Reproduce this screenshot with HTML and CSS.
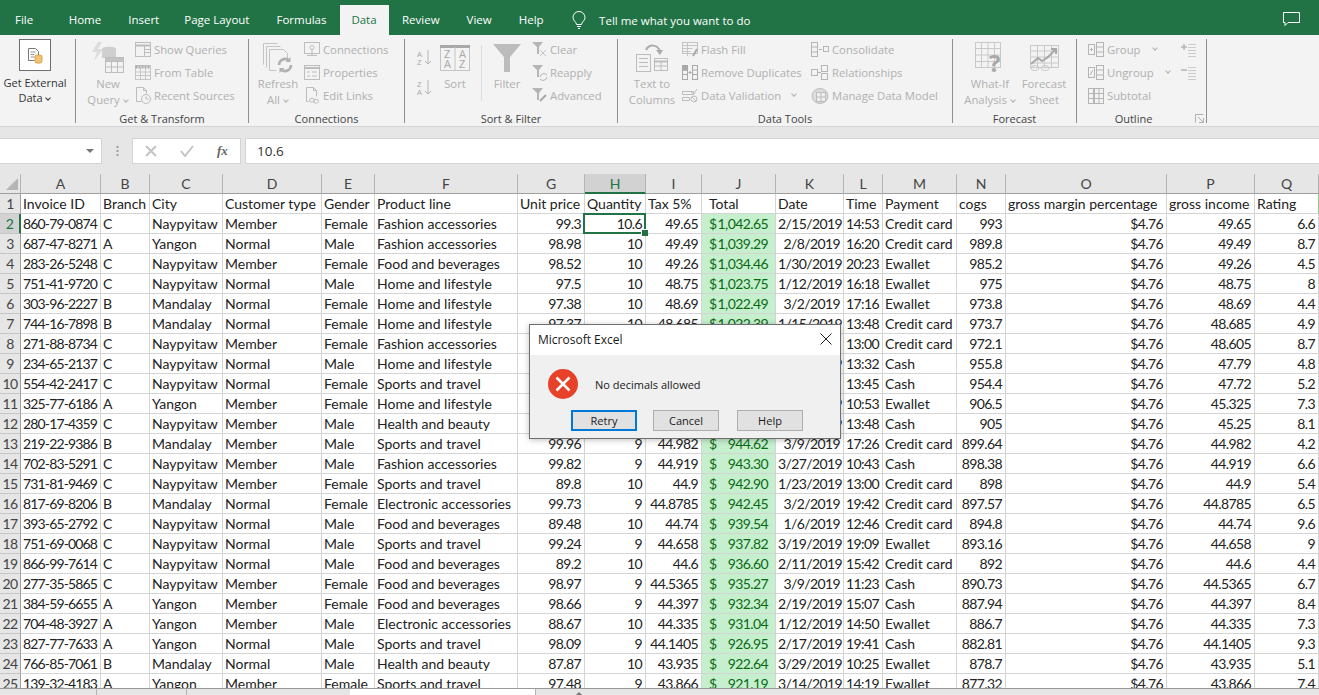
FILE: index.html
```html
<!DOCTYPE html>
<html lang="en">
<head>
    <meta charset="UTF-8">
    <meta name="viewport" content="width=device-width, initial-scale=1.0">
    <title>Microsoft Excel</title>
    <link rel="stylesheet" href="styles.css">
</head>
<body>
    <!-- Tabs -->
    <div class="tabbar">
        <span class="tab tab-file">File</span>
        <span class="tab">Home</span>
        <span class="tab">Insert</span>
        <span class="tab tab-layout">Page Layout</span>
        <span class="tab">Formulas</span>
        <span class="tab tab-active">Data</span>
        <span class="tab">Review</span>
        <span class="tab">View</span>
        <span class="tab">Help</span>
        <svg class="bulb" width="14" height="18" viewBox="0 0 14 18" fill="none" stroke="#fff"><path d="M4.5 13.5c0-2.500-3.500-3.500-3.500-7a6 6 0 0 1 12 0c0 3.500-3.500 4.500-3.500 7z"/><path d="M5 15.500h4M6 17.500h2"/></svg>
        <span class="tell">Tell me what you want to do</span>
        <svg class="comment" width="17" height="15" viewBox="0 0 17 15" fill="none" stroke="#fff"><path d="M.5.500h16v10H5l-3 3v-3H.5z"/></svg>
    </div>

    <!-- Ribbon -->
    <div class="ribbon">
        <div class="group g-ext">
            <div class="group-body">
                <div class="big big-ext">
                    <div class="ext-box">
                        <svg width="16" height="17" viewBox="0 0 16 17" fill="none" stroke="#777"><path d="M1.500 1.500h7l3 3v4M1.500 1.500v12h6"/><path d="M3.500 5h5M3.500 7.500h4M3.500 10h4" stroke="#999"/><rect x="8" y="8" width="7" height="8" rx="2" fill="#f2c375" stroke="#d9a24a"/></svg>
                    </div>
                    <span class="dark ext-text">Get External</span>
                    <span class="dark">Data <i class="chev dark-chev"></i></span>
                </div>
            </div>
            <div class="group-label">&nbsp;</div>
        </div>

        <div class="group g-trans">
            <div class="group-body">
                <div class="big big-query">
                    <div class="big-icon">
                        <svg width="34" height="33" viewBox="0 0 34 33" fill="none" stroke="#bdbdbd"><path d="M7 1 1 11h5l-3 9 9-12H7l4-7z" fill="#dcdcdc" stroke="none"/><path d="M11 8c0-3 14-3 14 0v9H11z" fill="#cfcfcf" stroke="none"/><rect x="14.500" y="16.500" width="18" height="15" fill="#f3f3f3"/><path d="M14.500 20.500h18v-4h-18z" fill="#c4c4c4"/><path d="M14.500 26h18M20.500 20v11M26.500 20v11"/></svg>
                    </div>
                    <span>New</span>
                    <span>Query <i class="chev"></i></span>
                </div>
                <div class="smalls smalls-query">
                    <div class="small"><svg width="16" height="15" viewBox="0 0 16 15" fill="none" stroke="#bdbdbd"><rect x=".5" y=".5" width="15" height="14"/><path d="M.5 3.500h15" stroke-width="2"/><path d="M9.500 4v10M9.500 7.500h6M9.500 10.500h6"/></svg>Show Queries</div>
                    <div class="small"><svg width="16" height="15" viewBox="0 0 16 15" fill="none" stroke="#c6c6c6"><rect x=".5" y=".5" width="15" height="14"/><path d="M.5 2h15" stroke="#a8a8a8" stroke-width="3" stroke-dasharray="2 1"/><path d="M.5 7h15M.5 10.500h15M5.500 3v11M10.500 3v11"/></svg>From Table</div>
                    <div class="small"><svg width="16" height="17" viewBox="0 0 16 17" fill="none" stroke="#bdbdbd"><path d="M6.500 14.500h-5v-14h7l3 3v3M8.500 .5v3h3"/><circle cx="11" cy="12" r="4.500"/><path d="M11 9.500V12h2.500"/></svg>Recent Sources</div>
                </div>
            </div>
            <div class="group-label">Get &amp; Transform</div>
        </div>

        <div class="group g-conn">
            <div class="group-body">
                <div class="big big-refresh">
                    <div class="big-icon">
                        <svg width="32" height="32" viewBox="0 0 32 32" fill="none" stroke="#c4c4c4"><path d="M1.500 22.500v-21h14M4.500 25.500v-21h14"/><path d="M7.500 28.500v-21h14l4 4v7M7.500 28.500h7" /><path d="M17 23a6 6 0 0 1 10-4.500M29 23a6 6 0 0 1-10 4.500" stroke="#b0b0b0" stroke-width="2.500"/><path d="M28.500 15v5h-5M17.500 31v-5h5" fill="#b0b0b0" stroke="none"/></svg>
                    </div>
                    <span>Refresh</span>
                    <span>All <i class="chev"></i></span>
                </div>
                <div class="smalls">
                    <div class="small"><svg width="16" height="15" viewBox="0 0 16 15" fill="none" stroke="#bdbdbd"><rect x=".5" y=".5" width="15" height="11"/><circle cx="8" cy="5.500" r="2"/><path d="M3 13.500h10M8 8v5"/></svg>Connections</div>
                    <div class="small"><svg width="16" height="15" viewBox="0 0 16 15" fill="none" stroke="#bdbdbd"><rect x=".5" y=".5" width="15" height="14"/><path d="M.5 3h15" stroke-width="2"/><path d="M3 7h3M3 11h3M8 7h5M8 11h5"/></svg>Properties</div>
                    <div class="small"><svg width="16" height="17" viewBox="0 0 16 17" fill="none" stroke="#bdbdbd"><path d="M4.500 14.500h-2v-14h7l3 3v6M9.500 .5v3h3"/><rect x="5.500" y="11.500" width="5" height="3.500" rx="1.700"/><rect x="9.500" y="12.500" width="5" height="3.500" rx="1.700"/></svg>Edit Links</div>
                </div>
            </div>
            <div class="group-label">Connections</div>
        </div>

        <div class="group g-sort">
            <div class="group-body">
                <div class="sort-arrows">
                    <svg width="15" height="17" viewBox="0 0 15 17" fill="none" stroke="#b5b5b5"><text x="0" y="7.500" class="icon-letter">A</text><text x="0" y="15.500" class="icon-letter">Z</text><path d="M11 1v14M8 12l3 3 3-3"/></svg>
                    <svg width="15" height="17" viewBox="0 0 15 17" fill="none" stroke="#b5b5b5"><text x="0" y="7.500" class="icon-letter">Z</text><text x="0" y="15.500" class="icon-letter">A</text><path d="M11 1v14M8 12l3 3 3-3"/></svg>
                </div>
                <div class="big big-sort">
                    <div class="big-icon">
                        <svg width="30" height="26" viewBox="0 0 30 26" fill="none" stroke="#c4c4c4"><rect x=".5" y=".5" width="29" height="25"/><path d="M0 1.500h30" stroke="#a8a8a8" stroke-width="3"/><path d="M15 2v23"/><text x="4" y="13" class="icon-letter big-letter">Z</text><text x="19" y="13" class="icon-letter big-letter">A</text><text x="4" y="23" class="icon-letter big-letter">A</text><text x="19" y="23" class="icon-letter big-letter">Z</text></svg>
                    </div>
                    <span>Sort</span>
                </div>
                <div class="vsep"></div>
                <div class="big big-filter">
                    <div class="big-icon">
                        <svg width="28" height="28" viewBox="0 0 28 28"><path d="M0 0h28L17 13v15h-6V13z" fill="#bcbcbc"/></svg>
                    </div>
                    <span>Filter</span>
                </div>
                <div class="smalls smalls-filter">
                    <div class="small"><svg width="16" height="16" viewBox="0 0 16 16"><path d="M0 0h11L7 5v7H5V5z" fill="#b5b5b5"/><path d="M8 8l6 6M14 8l-6 6" stroke="#c4c4c4" fill="none"/></svg>Clear</div>
                    <div class="small"><svg width="16" height="16" viewBox="0 0 16 16"><path d="M0 0h11L7 5v7H5V5z" fill="#b5b5b5"/><path d="M8 12a4 4 0 0 1 7-2M15 12a4 4 0 0 1-7 2" stroke="#b5b5b5" fill="none"/></svg>Reapply</div>
                    <div class="small"><svg width="16" height="16" viewBox="0 0 16 16"><path d="M0 0h11L7 5v7H5V5z" fill="#b5b5b5"/><path d="M8 13l6-6" stroke="#a8a8a8" stroke-width="2"/></svg>Advanced</div>
                </div>
            </div>
            <div class="group-label">Sort &amp; Filter</div>
        </div>

        <div class="group g-tools">
            <div class="group-body">
                <div class="big big-text">
                    <div class="big-icon">
                        <svg width="32" height="28" viewBox="0 0 32 28" fill="none" stroke="#bdbdbd"><rect x=".5" y="10.500" width="14" height="17"/><path d="M3 14.500h9M3 18.500h9M3 22.500h9"/><rect x="18.500" y="14.500" width="13" height="12"/><path d="M18.500 17.500h13" stroke-width="2"/><path d="M18.500 22h13M25 18v8"/><path d="M10 6c3-6 11-6 14 1" stroke="#aaa" stroke-width="2"/><path d="M20 6h7l-3 5z" fill="#aaa" stroke="none"/></svg>
                    </div>
                    <span>Text to</span>
                    <span>Columns</span>
                </div>
                <div class="smalls smalls-tools">
                    <div class="small"><svg width="16" height="15" viewBox="0 0 16 15" fill="none" stroke="#c4c4c4"><rect x=".5" y=".5" width="15" height="11"/><path d="M.5 3.500h15M.5 6.500h10M.5 9.500h8M5.500 1v13"/><path d="M11 14l4-7" stroke="#aaa" stroke-width="2"/></svg>Flash Fill</div>
                    <div class="small"><svg width="16" height="15" viewBox="0 0 16 15" fill="none" stroke="#a8a8a8"><rect x=".5" y=".5" width="5" height="14"/><rect x="10.500" y=".5" width="5" height="14"/><path d="M.5 5h5M.5 9.500h5M10.500 5h5M10.500 9.500h5"/><rect x="1" y="1" width="4" height="4" fill="#a8a8a8"/><path d="M6.500 7.500h3M8 6v3"/></svg>Remove Duplicates</div>
                    <div class="small"><svg width="16" height="15" viewBox="0 0 16 15" fill="none" stroke="#bdbdbd"><path d="M.5 3.500h11v3H.5zM.5 9.500h7v3H.5z"/><path d="M9 4l3 2 3-5"/><circle cx="12" cy="11" r="3"/><path d="M10 9l4 4"/></svg>Data Validation <i class="chev chev-dv"></i></div>
                </div>
                <div class="smalls smalls-model">
                    <div class="small"><svg width="18" height="15" viewBox="0 0 18 15" fill="none" stroke="#b5b5b5"><rect x=".5" y=".5" width="6" height="14"/><path d="M.5 5h6M.5 10h6M8 7.500h3"/><rect x="12.500" y="4.500" width="5" height="5"/></svg>Consolidate</div>
                    <div class="small"><svg width="18" height="15" viewBox="0 0 18 15" fill="none" stroke="#b5b5b5"><rect x=".5" y="4.500" width="6" height="6"/><rect x="10.500" y=".5" width="6" height="6"/><rect x="10.500" y="8.500" width="6" height="6"/><path d="M7 7.500h3"/></svg>Relationships</div>
                    <div class="small"><svg width="18" height="16" viewBox="0 0 18 16" fill="none" stroke="#bdbdbd"><ellipse cx="9" cy="8" rx="8" ry="7.500" fill="#dcdcdc"/><rect x="5.500" y="4.500" width="9" height="9" fill="#eee"/><path d="M5.500 9h9M10 4.500v9"/></svg>Manage Data Model</div>
                </div>
            </div>
            <div class="group-label">Data Tools</div>
        </div>

        <div class="group g-fcast">
            <div class="group-body">
                <div class="big big-whatif">
                    <div class="big-icon">
                        <svg width="30" height="32" viewBox="0 0 30 32" fill="none" stroke="#c9c9c9"><rect x=".5" y=".5" width="25" height="25"/><path d="M.5 6.500h25M.5 13h25M.5 19.500h25M6.500 1v25M13 1v25M19.500 1v25"/><text x="14" y="30" class="icon-q">?</text></svg>
                    </div>
                    <span>What-If</span>
                    <span>Analysis <i class="chev"></i></span>
                </div>
                <div class="big big-sheet">
                    <div class="big-icon">
                        <svg width="29" height="26" viewBox="0 0 29 26" fill="none" stroke="#c9c9c9"><rect x=".5" y=".5" width="28" height="22"/><path d="M.5 6h28M.5 12h28M.5 18h28M7.500 1v21M14.500 1v21M21.500 1v21"/><path d="M1 19l7-6 4 3 6-4" stroke="#a8a8a8" stroke-width="2"/><path d="M17 13l8-8M21 4h5v5" stroke="#a8a8a8" stroke-width="2"/><ellipse cx="5" cy="23" rx="4" ry="2.500"/><ellipse cx="15" cy="23" rx="4" ry="2.500"/></svg>
                    </div>
                    <span>Forecast</span>
                    <span>Sheet</span>
                </div>
            </div>
            <div class="group-label">Forecast</div>
        </div>

        <div class="group g-outline">
            <div class="group-body">
                <div class="smalls smalls-outline">
                    <div class="small"><svg width="16" height="15" viewBox="0 0 16 15" fill="none" stroke="#b5b5b5"><rect x=".5" y="2.500" width="6" height="10"/><path d="M2 7.500h3M3.500 6v3"/><rect x="8.500" y=".5" width="7" height="14"/><path d="M8.500 5h7M8.500 10h7"/></svg>Group <i class="chev chev-group"></i></div>
                    <div class="small"><svg width="16" height="15" viewBox="0 0 16 15" fill="none" stroke="#b5b5b5"><rect x=".5" y="2.500" width="6" height="10"/><path d="M2 10l3-5"/><rect x="8.500" y=".5" width="7" height="14"/><path d="M8.500 5h7M8.500 10h7"/></svg>Ungroup <i class="chev chev-ungroup"></i></div>
                    <div class="small"><svg width="16" height="16" viewBox="0 0 16 16" fill="none" stroke="#b5b5b5"><rect x=".5" y=".5" width="5" height="15"/><rect x="6.500" y=".5" width="9" height="15"/><path d="M.5 5.500h15M.5 10.500h15M11 1v14"/></svg>Subtotal</div>
                </div>
                <div class="smalls smalls-rows">
                    <div class="small"><svg width="15" height="14" viewBox="0 0 15 14" fill="none" stroke="#b5b5b5"><path d="M0 4h6M3 1v6" stroke-width="1.500"/><path d="M7 1.500h8M7 4.500h8M7 7.500h8M7 10.500h8M7 13.500h8" stroke="#ccc"/></svg></div>
                    <div class="small"><svg width="15" height="14" viewBox="0 0 15 14" fill="none" stroke="#b5b5b5"><path d="M0 4h6" stroke-width="1.500"/><path d="M7 1.500h8M7 4.500h8M7 7.500h8M7 10.500h8M7 13.500h8" stroke="#ccc"/></svg></div>
                </div>
            </div>
            <div class="group-label label-outline">Outline</div>
            <svg class="launcher" width="9" height="9" viewBox="0 0 9 9" fill="none" stroke="#b0b0b0"><path d="M.5 8.500v-8h8M8.500 4v4.500H4M3 3l5 5"/></svg>
        </div>
    </div>

    <!-- Formula bar -->
    <div class="formula">
        <div class="namebox"><i class="name-arrow"></i></div>
        <div class="fdots"></div>
        <div class="fbuttons">
            <svg width="12" height="12" viewBox="0 0 12 12" stroke="#c4c4c4" stroke-width="2"><path d="M1 1l10 10M11 1 1 11"/></svg>
            <svg width="14" height="12" viewBox="0 0 14 12" stroke="#c4c4c4" stroke-width="2" fill="none"><path d="M1 6l4 5 8-10"/></svg>
            <span class="fx">fx</span>
        </div>
        <div class="finput">10.6</div>
    </div>

    <!-- Grid -->
    <div class="grid">
        <table class="sheet">
            <colgroup>
                <col class="c-rh"><col class="c-a"><col class="c-b"><col class="c-c"><col class="c-d"><col class="c-e"><col class="c-f"><col class="c-g"><col class="c-h"><col class="c-i"><col class="c-j"><col class="c-k"><col class="c-l"><col class="c-m"><col class="c-n"><col class="c-o"><col class="c-p"><col class="c-q">
            </colgroup>
            <thead>
                <tr>
                    <th class="corner"><svg width="12" height="12" viewBox="0 0 12 12"><path d="M12 0v12H0z" fill="#b5b5b5"/></svg></th>
                    <th>A</th><th>B</th><th>C</th><th>D</th><th>E</th><th>F</th><th>G</th><th class="col-on">H</th><th>I</th><th>J</th><th>K</th><th>L</th><th>M</th><th>N</th><th>O</th><th>P</th><th>Q</th>
                </tr>
            </thead>
            <tbody>
                <tr class="titles"><th>1</th><td>Invoice ID</td><td>Branch</td><td>City</td><td>Customer type</td><td>Gender</td><td>Product line</td><td>Unit price</td><td>Quantity</td><td>Tax 5%</td><td class="title-total">Total</td><td>Date</td><td>Time</td><td>Payment</td><td>cogs</td><td>gross margin percentage</td><td>gross income</td><td class="title-edge">Rating</td></tr>
                <tr><th class="row-on">2</th><td>860-79-0874</td><td>C</td><td>Naypyitaw</td><td>Member</td><td>Female</td><td>Fashion accessories</td><td>99.3</td><td class="sel">10.6</td><td>49.65</td><td><span>$</span>1,042.65</td><td>2/15/2019</td><td>14:53</td><td>Credit card</td><td>993</td><td>$4.76</td><td>49.65</td><td>6.6</td></tr>
                <tr><th>3</th><td>687-47-8271</td><td>A</td><td>Yangon</td><td>Normal</td><td>Male</td><td>Fashion accessories</td><td>98.98</td><td>10</td><td>49.49</td><td><span>$</span>1,039.29</td><td>2/8/2019</td><td>16:20</td><td>Credit card</td><td>989.8</td><td>$4.76</td><td>49.49</td><td>8.7</td></tr>
                <tr><th>4</th><td>283-26-5248</td><td>C</td><td>Naypyitaw</td><td>Member</td><td>Female</td><td>Food and beverages</td><td>98.52</td><td>10</td><td>49.26</td><td><span>$</span>1,034.46</td><td>1/30/2019</td><td>20:23</td><td>Ewallet</td><td>985.2</td><td>$4.76</td><td>49.26</td><td>4.5</td></tr>
                <tr><th>5</th><td>751-41-9720</td><td>C</td><td>Naypyitaw</td><td>Normal</td><td>Male</td><td>Home and lifestyle</td><td>97.5</td><td>10</td><td>48.75</td><td><span>$</span>1,023.75</td><td>1/12/2019</td><td>16:18</td><td>Ewallet</td><td>975</td><td>$4.76</td><td>48.75</td><td>8</td></tr>
                <tr><th>6</th><td>303-96-2227</td><td>B</td><td>Mandalay</td><td>Normal</td><td>Female</td><td>Home and lifestyle</td><td>97.38</td><td>10</td><td>48.69</td><td><span>$</span>1,022.49</td><td>3/2/2019</td><td>17:16</td><td>Ewallet</td><td>973.8</td><td>$4.76</td><td>48.69</td><td>4.4</td></tr>
                <tr><th>7</th><td>744-16-7898</td><td>B</td><td>Mandalay</td><td>Normal</td><td>Female</td><td>Home and lifestyle</td><td>97.37</td><td>10</td><td>48.685</td><td><span>$</span>1,022.39</td><td>1/15/2019</td><td>13:48</td><td>Credit card</td><td>973.7</td><td>$4.76</td><td>48.685</td><td>4.9</td></tr>
                <tr><th>8</th><td>271-88-8734</td><td>C</td><td>Naypyitaw</td><td>Member</td><td>Female</td><td>Fashion accessories</td><td>97.21</td><td>10</td><td>48.605</td><td><span>$</span>1,020.71</td><td>2/8/2019</td><td>13:00</td><td>Credit card</td><td>972.1</td><td>$4.76</td><td>48.605</td><td>8.7</td></tr>
                <tr><th>9</th><td>234-65-2137</td><td>C</td><td>Naypyitaw</td><td>Normal</td><td>Male</td><td>Home and lifestyle</td><td>95.58</td><td>10</td><td>47.79</td><td><span>$</span>1,003.59</td><td>1/16/2019</td><td>13:32</td><td>Cash</td><td>955.8</td><td>$4.76</td><td>47.79</td><td>4.8</td></tr>
                <tr><th>10</th><td>554-42-2417</td><td>C</td><td>Naypyitaw</td><td>Normal</td><td>Female</td><td>Sports and travel</td><td>95.44</td><td>10</td><td>47.72</td><td><span>$</span>1,002.12</td><td>1/9/2019</td><td>13:45</td><td>Cash</td><td>954.4</td><td>$4.76</td><td>47.72</td><td>5.2</td></tr>
                <tr><th>11</th><td>325-77-6186</td><td>A</td><td>Yangon</td><td>Member</td><td>Female</td><td>Home and lifestyle</td><td>90.65</td><td>10</td><td>45.325</td><td><span>$</span>951.83</td><td>3/10/2019</td><td>10:53</td><td>Ewallet</td><td>906.5</td><td>$4.76</td><td>45.325</td><td>7.3</td></tr>
                <tr><th>12</th><td>280-17-4359</td><td>C</td><td>Naypyitaw</td><td>Member</td><td>Male</td><td>Health and beauty</td><td>90.5</td><td>10</td><td>45.25</td><td><span>$</span>950.25</td><td>1/25/2019</td><td>13:48</td><td>Cash</td><td>905</td><td>$4.76</td><td>45.25</td><td>8.1</td></tr>
                <tr><th>13</th><td>219-22-9386</td><td>B</td><td>Mandalay</td><td>Member</td><td>Male</td><td>Sports and travel</td><td>99.96</td><td>9</td><td>44.982</td><td><span>$</span>944.62</td><td>3/9/2019</td><td>17:26</td><td>Credit card</td><td>899.64</td><td>$4.76</td><td>44.982</td><td>4.2</td></tr>
                <tr><th>14</th><td>702-83-5291</td><td>C</td><td>Naypyitaw</td><td>Member</td><td>Male</td><td>Fashion accessories</td><td>99.82</td><td>9</td><td>44.919</td><td><span>$</span>943.30</td><td>3/27/2019</td><td>10:43</td><td>Cash</td><td>898.38</td><td>$4.76</td><td>44.919</td><td>6.6</td></tr>
                <tr><th>15</th><td>731-81-9469</td><td>C</td><td>Naypyitaw</td><td>Member</td><td>Female</td><td>Sports and travel</td><td>89.8</td><td>10</td><td>44.9</td><td><span>$</span>942.90</td><td>1/23/2019</td><td>13:00</td><td>Credit card</td><td>898</td><td>$4.76</td><td>44.9</td><td>5.4</td></tr>
                <tr><th>16</th><td>817-69-8206</td><td>B</td><td>Mandalay</td><td>Normal</td><td>Female</td><td>Electronic accessories</td><td>99.73</td><td>9</td><td>44.8785</td><td><span>$</span>942.45</td><td>3/2/2019</td><td>19:42</td><td>Credit card</td><td>897.57</td><td>$4.76</td><td>44.8785</td><td>6.5</td></tr>
                <tr><th>17</th><td>393-65-2792</td><td>C</td><td>Naypyitaw</td><td>Normal</td><td>Male</td><td>Food and beverages</td><td>89.48</td><td>10</td><td>44.74</td><td><span>$</span>939.54</td><td>1/6/2019</td><td>12:46</td><td>Credit card</td><td>894.8</td><td>$4.76</td><td>44.74</td><td>9.6</td></tr>
                <tr><th>18</th><td>751-69-0068</td><td>C</td><td>Naypyitaw</td><td>Normal</td><td>Male</td><td>Sports and travel</td><td>99.24</td><td>9</td><td>44.658</td><td><span>$</span>937.82</td><td>3/19/2019</td><td>19:09</td><td>Ewallet</td><td>893.16</td><td>$4.76</td><td>44.658</td><td>9</td></tr>
                <tr><th>19</th><td>866-99-7614</td><td>C</td><td>Naypyitaw</td><td>Normal</td><td>Male</td><td>Food and beverages</td><td>89.2</td><td>10</td><td>44.6</td><td><span>$</span>936.60</td><td>2/11/2019</td><td>15:42</td><td>Credit card</td><td>892</td><td>$4.76</td><td>44.6</td><td>4.4</td></tr>
                <tr><th>20</th><td>277-35-5865</td><td>C</td><td>Naypyitaw</td><td>Member</td><td>Female</td><td>Food and beverages</td><td>98.97</td><td>9</td><td>44.5365</td><td><span>$</span>935.27</td><td>3/9/2019</td><td>11:23</td><td>Cash</td><td>890.73</td><td>$4.76</td><td>44.5365</td><td>6.7</td></tr>
                <tr><th>21</th><td>384-59-6655</td><td>A</td><td>Yangon</td><td>Member</td><td>Female</td><td>Food and beverages</td><td>98.66</td><td>9</td><td>44.397</td><td><span>$</span>932.34</td><td>2/19/2019</td><td>15:07</td><td>Cash</td><td>887.94</td><td>$4.76</td><td>44.397</td><td>8.4</td></tr>
                <tr><th>22</th><td>704-48-3927</td><td>A</td><td>Yangon</td><td>Member</td><td>Male</td><td>Electronic accessories</td><td>88.67</td><td>10</td><td>44.335</td><td><span>$</span>931.04</td><td>1/12/2019</td><td>14:50</td><td>Ewallet</td><td>886.7</td><td>$4.76</td><td>44.335</td><td>7.3</td></tr>
                <tr><th>23</th><td>827-77-7633</td><td>A</td><td>Yangon</td><td>Normal</td><td>Male</td><td>Sports and travel</td><td>98.09</td><td>9</td><td>44.1405</td><td><span>$</span>926.95</td><td>2/17/2019</td><td>19:41</td><td>Cash</td><td>882.81</td><td>$4.76</td><td>44.1405</td><td>9.3</td></tr>
                <tr><th>24</th><td>766-85-7061</td><td>B</td><td>Mandalay</td><td>Normal</td><td>Male</td><td>Health and beauty</td><td>87.87</td><td>10</td><td>43.935</td><td><span>$</span>922.64</td><td>3/29/2019</td><td>10:25</td><td>Ewallet</td><td>878.7</td><td>$4.76</td><td>43.935</td><td>5.1</td></tr>
                <tr><th>25</th><td>139-32-4183</td><td>A</td><td>Yangon</td><td>Member</td><td>Female</td><td>Sports and travel</td><td>97.48</td><td>9</td><td>43.866</td><td><span>$</span>921.19</td><td>3/14/2019</td><td>14:19</td><td>Ewallet</td><td>877.32</td><td>$4.76</td><td>43.866</td><td>7.4</td></tr>
            </tbody>
        </table>
    </div>

    <!-- Sheet tabs strip, cut off by the window -->
    <div class="bottom">
        <div class="bottom-seg seg-1"></div>
        <div class="bottom-seg seg-2"></div>
        <div class="bottom-seg seg-3"></div>
        <div class="bottom-white"></div>
        <div class="bottom-rest"><i class="scroll-arrow"></i></div>
    </div>

    <!-- Validation message -->
    <div class="dialog">
        <div class="dialog-title">
            <span>Microsoft Excel</span>
            <svg width="12" height="12" viewBox="0 0 12 12" stroke="#222" fill="none"><path d="M.5.5l11 11M11.500.5l-11 11"/></svg>
        </div>
        <div class="dialog-body">
            <div class="dialog-msg">
                <svg width="30" height="30" viewBox="0 0 30 30"><circle cx="15" cy="15" r="15" fill="#e8412a"/><path d="M8.500 8.500l13 13M21.500 8.500l-13 13" stroke="#fff" stroke-width="2.500"/></svg>
                <span>No decimals allowed</span>
            </div>
            <div class="dialog-buttons">
                <button class="btn btn-default">Retry</button>
                <button class="btn btn-cancel">Cancel</button>
                <button class="btn btn-help">Help</button>
            </div>
        </div>
    </div>
</body>
</html>
```

FILE: styles.css
```css
* {
    box-sizing: border-box;
}

body {
    margin: 0;
    width: 1319px;
    height: 695px;
    overflow: hidden;
    display: flex;
    flex-direction: column;
    position: relative;
    font-family: "Open Sans", "Noto Sans", sans-serif;
    font-size: 11.3px;
    background-color: #e6e6e6;
}

/* tabs */
.tabbar {
    height: 35px;
    flex: none;
    display: flex;
    align-items: center;
    padding-top: 5px;
    background-color: #217346;
    color: #fff;
    font-size: 11.5px;
}

.tab {
    height: 30px;
    line-height: 30px;
    padding: 0 13.5px;
}

.tab-file {
    padding-left: 15px;
    padding-right: 22px;
}

.tab-layout {
    padding-left: 11.5px;
}

.tab-active {
    width: 49px;
    margin-left: -0.5px;
    padding: 0;
    text-align: center;
    background-color: #f3f3f3;
    color: #217346;
}

.bulb {
    margin-left: 15px;
    margin-right: 13px;
}

.comment {
    margin-left: auto;
    margin-right: 19px;
    margin-top: -2px;
}

/* ribbon */
.ribbon {
    height: 92px;
    flex: none;
    display: flex;
    padding-top: 4px;
    background-color: #f3f3f3;
    border-bottom: 1px solid #d5d5d5;
    color: #b0b0b0;
}

.group {
    height: 84px;
    flex: none;
    position: relative;
    border-right: 1px solid #8f8f8f;
}

.g-ext { width: 76px; }
.g-trans { width: 173px; }
.g-conn { width: 156px; }
.g-sort { width: 213px; }
.g-tools { width: 335px; }
.g-fcast { width: 124px; }
.g-outline { width: 130px; }

.group-body {
    height: 72px;
    display: flex;
}

.group-label {
    height: 16px;
    line-height: 16px;
    font-size: 11px;
    text-align: center;
    color: #444;
    white-space: nowrap;
}

.label-outline {
    padding-right: 16px;
}

.launcher {
    position: absolute;
    right: 2px;
    bottom: 0;
}

.big {
    flex: none;
    display: flex;
    flex-direction: column;
    align-items: center;
    line-height: 16px;
    white-space: nowrap;
}

.big-icon {
    height: 37px;
    display: flex;
    align-items: center;
}

.dark {
    color: #333;
    font-size: 11px;
    line-height: 15px;
}

.big-ext { width: 70px; }
.big-query { width: 50px; margin-left: 7px; }
.big-refresh { width: 46px; margin-left: 6px; }
.big-sort { width: 40px; margin-left: 3px; }
.big-filter { width: 40px; margin-left: 5px; }
.big-text { width: 56px; margin-left: 6px; }
.big-whatif { width: 62px; margin-left: 6px; }
.big-sheet { width: 46px; }

.ext-box {
    width: 32px;
    height: 32px;
    border: 1px solid #6e6e6e;
    background-color: #fff;
    display: flex;
    align-items: center;
    justify-content: center;
}

.ext-text {
    margin-top: 4px;
}

.chev {
    display: inline-block;
    width: 4px;
    height: 4px;
    margin: 0 1px 2px 1px;
    border-right: 1px solid #b0b0b0;
    border-bottom: 1px solid #b0b0b0;
    transform: rotate(45deg);
}

.dark-chev {
    border-color: #333;
}

.chev-dv { margin-left: 8px; }
.chev-group { margin-left: 10px; }
.chev-ungroup { margin-left: 9px; }

.smalls {
    flex: none;
    margin-left: 3px;
    margin-top: -1px;
}

.small {
    height: 23px;
    display: flex;
    align-items: center;
    gap: 3px;
    white-space: nowrap;
}

.small svg {
    flex: none;
}

.small .chev {
    margin-bottom: 3px;
}

.smalls-query { margin-left: 2px; }
.smalls-filter { margin-left: 5px; }
.smalls-filter .small { gap: 2px; }
.smalls-tools { width: 129px; margin-left: 2px; }
.smalls-model { margin-left: 0; }
.smalls-outline { width: 93px; margin-left: 11px; }
.smalls-rows { margin-left: 0; }

.sort-arrows {
    margin-left: 12px;
    padding-top: 10px;
    display: flex;
    flex-direction: column;
    gap: 13px;
}

.vsep {
    width: 1px;
    height: 56px;
    margin: 6px 0 0 6px;
    background-color: #dcdcdc;
}

.icon-letter {
    font-family: "Open Sans", sans-serif;
    font-size: 8px;
    fill: #a8a8a8;
    stroke: none;
}

.big-letter {
    font-size: 11px;
}

.icon-q {
    font-family: "Open Sans", sans-serif;
    font-size: 24px;
    font-weight: 700;
    fill: #a8a8a8;
    stroke: none;
}

/* formula bar */
.formula {
    height: 47px;
    flex: none;
    display: flex;
    padding: 11px 0 10px;
    background-color: #e6e6e6;
}

.namebox, .fbuttons, .finput {
    height: 26px;
    background-color: #fff;
    border: 1px solid #d4d4d4;
}

.namebox {
    width: 102px;
    border-left: 0;
    position: relative;
}

.name-arrow {
    position: absolute;
    right: 7px;
    top: 10px;
    border-left: 4px solid transparent;
    border-right: 4px solid transparent;
    border-top: 4px solid #777;
}

.fdots {
    width: 30px;
    background: radial-gradient(circle, #999 1px, transparent 1.2px) center 8px / 3px 4px repeat-y;
    margin: 6px 0 6px;
    height: 14px;
    background-position: center;
}

.fbuttons {
    width: 109px;
    display: flex;
    align-items: center;
    gap: 23px;
    padding-left: 12px;
}

.fx {
    font-family: "Liberation Serif", serif;
    font-style: italic;
    font-weight: 700;
    font-size: 13px;
    color: #666;
}

.finput {
    flex: 1;
    margin-left: 4px;
    padding-left: 11px;
    line-height: 24px;
    font-size: 13.5px;
    color: #333;
    border-right: 0;
}

/* grid */
.grid {
    height: 514px;
    flex: none;
    overflow: hidden;
    background-color: #fff;
}

.sheet {
    width: 1319px;
    table-layout: fixed;
    border-collapse: separate;
    border-spacing: 0;
    font-family: Lato, "Open Sans", sans-serif;
    font-size: 14px;
    color: #222;
}

.c-rh { width: 21px; }
.c-a { width: 80px; }
.c-b { width: 49px; }
.c-c { width: 73px; }
.c-d { width: 99px; }
.c-e { width: 53px; }
.c-f { width: 143px; }
.c-g { width: 67px; }
.c-h { width: 61px; }
.c-i { width: 56px; }
.c-j { width: 74px; }
.c-k { width: 68px; }
.c-l { width: 39px; }
.c-m { width: 74px; }
.c-n { width: 49px; }
.c-o { width: 161px; }
.c-p { width: 88px; }
.c-q { width: 64px; }

.sheet th, .sheet td {
    height: 20px;
    padding: 0 2px;
    overflow: hidden;
    white-space: nowrap;
    font-weight: 400;
    border-right: 1px solid #d4d4d4;
    border-bottom: 1px solid #d4d4d4;
}

.sheet thead th {
    background-color: #e6e6e6;
    border-right-color: #b4b4b4;
    border-bottom-color: #9f9f9f;
    text-align: center;
    color: #444;
}

.sheet tbody th {
    background-color: #e6e6e6;
    border-right-color: #9f9f9f;
    border-bottom-color: #c6c6c6;
    text-align: center;
    color: #444;
    padding: 0;
    letter-spacing: -0.6px;
}

.corner {
    text-align: right !important;
    vertical-align: bottom;
    padding: 0 2px 3px 0 !important;
}

.corner svg {
    display: block;
    margin-left: auto;
}

.col-on {
    background-color: #d2d2d2 !important;
    color: #217346 !important;
    border-bottom: 2px solid #217346 !important;
}

.row-on {
    background-color: #d2d2d2 !important;
    color: #217346 !important;
    border-right: 2px solid #217346 !important;
}

/* Lato digits run wider than the sheet's, tighten the number columns */
tbody td:nth-child(8),
tbody td:nth-child(9),
tbody td:nth-child(10),
tbody td:nth-child(11),
tbody td:nth-child(12),
tbody td:nth-child(13),
tbody td:nth-child(15),
tbody td:nth-child(16),
tbody td:nth-child(17),
tbody td:nth-child(18) {
    letter-spacing: -0.6px;
}

tbody td:nth-child(2) {
    letter-spacing: -0.85px;
}

tbody td:nth-child(8),
tbody td:nth-child(9),
tbody td:nth-child(10),
tbody td:nth-child(11),
tbody td:nth-child(12),
tbody td:nth-child(15),
tbody td:nth-child(16),
tbody td:nth-child(17),
tbody td:nth-child(18) {
    text-align: right;
    padding-right: 3px;
}

tbody td:nth-child(11) {
    padding: 0 7px;
    background-color: #c6efce;
    color: #0a6a14;
}

tbody td:nth-child(11) span {
    float: left;
}

.titles td:nth-child(n) {
    text-align: left;
    padding: 0 2px;
    letter-spacing: 0;
}

.titles td.title-total {
    padding-left: 7px;
    background-color: #fff;
    color: #222;
}

.title-edge {
    border-right-color: #8fc98f !important;
}

.sheet td.sel {
    position: relative;
    overflow: visible;
}

.sel::after {
    content: "";
    position: absolute;
    left: -2px;
    right: -1px;
    top: -1px;
    bottom: -1px;
    border: 2px solid #217346;
}

.sel::before {
    content: "";
    position: absolute;
    z-index: 1;
    right: -3px;
    bottom: -3px;
    width: 6px;
    height: 6px;
    background-color: #217346;
    border: 1px solid #fff;
    border-width: 1px 0 0 1px;
}

/* bottom strip */
.bottom {
    height: 7px;
    flex: none;
    display: flex;
    border-top: 1px solid #9a9a9a;
    background-color: #e6e6e6;
}

.bottom-seg {
    border-right: 1px solid #b4b4b4;
}

.seg-1 { width: 97px; }
.seg-2 { width: 90px; }
.seg-3 { width: 163px; border-right: 0; }

.bottom-white {
    width: 185px;
    background-color: #fff;
}

.bottom-rest {
    flex: 1;
    position: relative;
    border-left: 1px solid #b4b4b4;
}

.scroll-arrow {
    position: absolute;
    left: 40px;
    top: 3px;
    border-left: 3px solid transparent;
    border-right: 3px solid transparent;
    border-bottom: 3px solid #777;
}

/* dialog */
.dialog {
    position: absolute;
    left: 529px;
    top: 324px;
    width: 312px;
    height: 115px;
    border: 1px solid #6f6f6f;
    background-color: #f0f0f0;
    box-shadow: 0 1px 6px rgba(0, 0, 0, 0.25);
    display: flex;
    flex-direction: column;
    color: #1a1a1a;
}

.dialog-title {
    height: 30px;
    flex: none;
    display: flex;
    align-items: center;
    justify-content: space-between;
    padding: 0 8px 2px 8px;
    background-color: #fff;
    font-size: 12px;
}

.dialog-body {
    flex: 1;
    padding: 14px 0 0 18px;
}

.dialog-msg {
    display: flex;
    align-items: center;
    gap: 17px;
    font-size: 11px;
}

.dialog-buttons {
    display: flex;
    margin: 11px 0 0 23px;
}

.btn {
    width: 66px;
    height: 21px;
    padding: 0;
    border: 1px solid #adadad;
    background-color: #e1e1e1;
    font-family: "Open Sans", sans-serif;
    font-size: 11px;
    color: #1a1a1a;
}

.btn-default {
    border: 2px solid #0078d7;
}

.btn-cancel {
    margin-left: 16px;
}

.btn-help {
    margin-left: 18px;
}
```
